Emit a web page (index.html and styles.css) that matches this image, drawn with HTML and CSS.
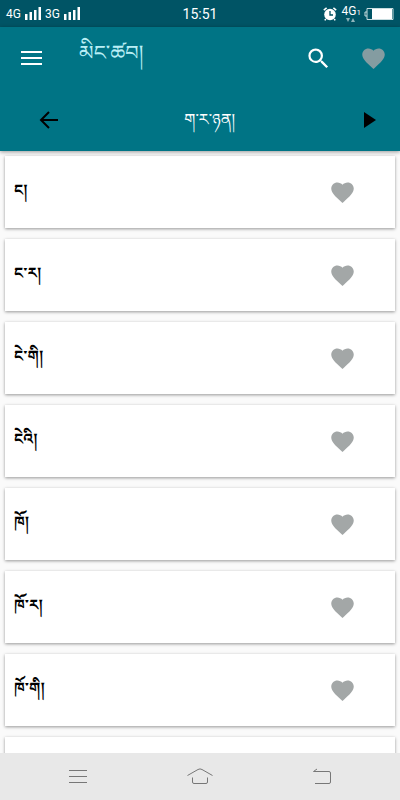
FILE: index.html
```html
<!DOCTYPE html>
<html lang="bo">

<head>
    <meta charset="UTF-8">
    <meta name="viewport" content="width=device-width, initial-scale=1.0">
    <title>མིང་ཚབ།</title>
    <link rel="stylesheet" href="styles.css">
</head>

<body>
    <svg class="defs" aria-hidden="true">
        <symbol id="heart" viewBox="0 0 24 24">
            <path d="M12 21.35l-1.45-1.32C5.4 15.36 2 12.28 2 8.5 2 5.42 4.42 3 7.5 3c1.74 0 3.41.81 4.5 2.09C13.09 3.81 14.76 3 16.5 3 19.58 3 22 5.42 22 8.5c0 3.78-3.4 6.86-8.55 11.54L12 21.35z" />
        </symbol>
        <symbol id="signal" viewBox="0 0 16 13">
            <path d="M0 7h2.500v6H0zM4.500 5H7v8H4.500zM9 3h2.500v10H9zM13.500 0H16v13h-2.500z" />
        </symbol>
    </svg>

    <div class="status">
        <div class="status-left">
            <span>4G</span>
            <svg class="signal"><use href="#signal" /></svg>
            <span>3G</span>
            <svg class="signal"><use href="#signal" /></svg>
        </div>
        <span class="clock">15:51</span>
        <div class="status-right">
            <svg class="alarm" viewBox="0 0 14 14">
                <circle cx="7" cy="7.500" r="5.800" fill="#fff" />
                <path d="M.8 3.200L3.600.9M13.200 3.200L10.400.9M2.800 12l-1 1.400M11.200 12l1 1.400" stroke="#fff" stroke-width="1.500" />
                <path d="M7 4v4h3" fill="none" stroke="#005160" stroke-width="1.300" />
            </svg>
            <div class="network">
                <span>4G<small>1</small></span>
                <svg viewBox="0 0 10 4"><path d="M0 0h4L2 4zM5 4h4L7 0z" fill="#8fb4bb" /></svg>
            </div>
            <svg class="battery" viewBox="0 0 30 12">
                <path d="M3 .5h26v11H3zM3 4H1v4h2" fill="none" stroke="#c8dcdf" />
                <path d="M8 1h20v10H8z" fill="#fff" />
            </svg>
        </div>
    </div>

    <header>
        <div class="toolbar">
            <button class="icon" aria-label="Menu">
                <svg viewBox="0 0 24 24"><path d="M2 5h21v2H2zM2 11h21v2H2zM2 17h21v2H2z" fill="#fff" /></svg>
            </button>
            <h1>མིང་ཚབ།</h1>
            <button class="icon search" aria-label="Search">
                <svg viewBox="0 0 24 24"><path d="M15.500 14h-.79l-.28-.27A6.470 6.470 0 0 0 16 9.500 6.500 6.500 0 1 0 9.500 16c1.610 0 3.090-.59 4.230-1.570l.27.28v.79l5 4.990L20.490 19l-4.990-5zm-6 0C7.010 14 5 11.990 5 9.500S7.010 5 9.500 5 14 7.010 14 9.500 11.990 14 9.500 14z" fill="#fff" /></svg>
            </button>
            <button class="icon heart" aria-label="Favourites"><svg><use href="#heart" /></svg></button>
        </div>
        <div class="player">
            <button class="icon" aria-label="Back">
                <svg viewBox="0 0 24 24"><path d="M21 12H4M12 4l-8 8 8 8" fill="none" stroke="#000" stroke-width="2" /></svg>
            </button>
            <h2>ག་ར་ཉན།</h2>
            <button class="icon" aria-label="Play">
                <svg viewBox="0 0 24 24"><path d="M6 4v16l12-8z" /></svg>
            </button>
        </div>
    </header>

    <main>
        <ul>
            <li class="card"><span>ང།</span><button class="icon heart" aria-label="Favourite"><svg><use href="#heart" /></svg></button></li>
            <li class="card"><span>ང་ར།</span><button class="icon heart" aria-label="Favourite"><svg><use href="#heart" /></svg></button></li>
            <li class="card"><span>ངེ་གི།</span><button class="icon heart" aria-label="Favourite"><svg><use href="#heart" /></svg></button></li>
            <li class="card"><span>ངེའི།</span><button class="icon heart" aria-label="Favourite"><svg><use href="#heart" /></svg></button></li>
            <li class="card"><span>ཁོ།</span><button class="icon heart" aria-label="Favourite"><svg><use href="#heart" /></svg></button></li>
            <li class="card"><span>ཁོ་ར།</span><button class="icon heart" aria-label="Favourite"><svg><use href="#heart" /></svg></button></li>
            <li class="card"><span>ཁོ་གི།</span><button class="icon heart" aria-label="Favourite"><svg><use href="#heart" /></svg></button></li>
            <li class="card"></li>
        </ul>
    </main>

    <nav>
        <button aria-label="Recent apps">
            <svg viewBox="0 0 28 20"><path d="M5 3.500h18M5 9.500h18M5 15.500h18" /></svg>
        </button>
        <button aria-label="Home">
            <svg viewBox="0 0 28 20"><path d="M1.500 8.500L12 2.500q2-1.200 4 0l10.500 6M6.500 10.500v4.500q0 1.500 1.500 1.500h12q1.500 0 1.500-1.500v-4.500" /></svg>
        </button>
        <button aria-label="Back">
            <svg viewBox="0 0 28 20"><path d="M9 2L5.500 4.500H21q1.500 0 1.500 1.500v9q0 1.500-1.500 1.500H7" /></svg>
        </button>
    </nav>
</body>

</html>
```
FILE: styles.css
```css
* {
    box-sizing: border-box;
}

body {
    display: flex;
    flex-direction: column;
    height: 100vh;
    margin: 0;
    background-color: #fafafa;
    font-family: Roboto, "Noto Sans Tibetan", "Noto Serif Tibetan", "DejaVu Sans", sans-serif;
}

button {
    display: flex;
    align-items: center;
    justify-content: center;
    padding: 0;
    border: none;
    background: none;
    cursor: pointer;
}

h1,
h2 {
    margin: 0;
    font-weight: normal;
}

.defs {
    position: absolute;
    width: 0;
    height: 0;
}

.status {
    display: grid;
    grid-template-columns: 1fr auto 1fr;
    align-items: center;
    height: 27px;
    padding: 0 6px;
    background-color: #005465;
    color: #fff;
    font-size: 12px;
}

.status-left,
.status-right {
    display: flex;
    align-items: center;
    gap: 4px;
}

.status-right {
    justify-content: flex-end;
    gap: 3px;
}

.clock {
    font-size: 14px;
}

.signal {
    width: 16px;
    height: 13px;
    fill: #fff;
}

.alarm {
    width: 14px;
    height: 14px;
    margin-right: 2px;
}

.network {
    display: flex;
    flex-direction: column;
    align-items: center;
    line-height: 11px;
}

.network small {
    font-size: 8px;
}

.network svg {
    width: 10px;
    height: 4px;
}

.battery {
    width: 30px;
    height: 12px;
}

header {
    z-index: 1;
    background-color: #007485;
    box-shadow: 0 1px 4px rgba(0, 0, 0, 0.4);
    color: #fff;
}

.toolbar,
.player {
    display: flex;
    align-items: center;
    height: 62px;
}

.toolbar {
    gap: 28px;
    padding: 0 13px 0 19px;
}

.player {
    justify-content: space-between;
    padding: 0 18px 0 37px;
}

.icon svg {
    width: 24px;
    height: 24px;
}

.search svg,
.heart svg {
    width: 27px;
    height: 27px;
}

.toolbar h1 {
    flex: 1;
    padding: 0 0 10px 8px;
    color: #b9eef5;
    font-size: 21px;
    line-height: 32px;
}

.player h2 {
    font-size: 16px;
    line-height: 24px;
}

.heart {
    fill: #a3a7a7;
}

.toolbar .heart {
    fill: #849ca1;
}

main {
    flex: 1;
    min-height: 0;
    overflow: hidden;
}

ul {
    display: flex;
    flex-direction: column;
    gap: 11px;
    margin: 0;
    padding: 5px;
    list-style: none;
}

.card {
    display: flex;
    flex-shrink: 0;
    align-items: center;
    justify-content: space-between;
    height: 72px;
    padding: 0 39px 0 9px;
    background-color: #fff;
    box-shadow: 0 1px 3px rgba(0, 0, 0, 0.4);
    font-size: 15px;
    font-weight: bold;
}

.card span {
    padding-top: 4px;
}

nav {
    display: flex;
    align-items: center;
    justify-content: space-between;
    height: 47px;
    padding: 0 64px;
    background-color: #e8e8e8;
}

nav svg {
    width: 28px;
    height: 20px;
    fill: none;
    stroke: #777;
    stroke-width: 1;
}
```
